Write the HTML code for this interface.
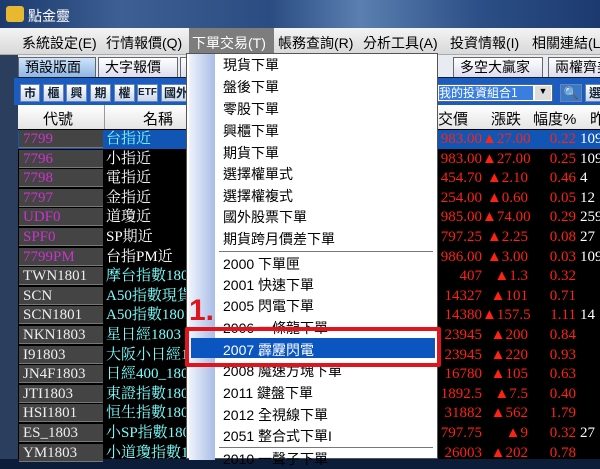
<!DOCTYPE html>
<html><head><meta charset="utf-8"><style>
*{margin:0;padding:0;box-sizing:border-box}
body{width:600px;height:459px;overflow:hidden;position:relative;background:#0c1d3a;font-family:"Liberation Serif","Noto Serif CJK SC","Noto Sans CJK TC",serif}
.a{position:absolute;white-space:nowrap}
.title{left:0;top:0;width:600px;height:28px;background:linear-gradient(90deg,#1c3a6e,#3d5f93 20%,#2a4c82 45%,#5a7fb0 60%,#2b4f86 80%,#1c3a70)}
.menubar{left:0;top:28px;width:600px;height:27px;background:linear-gradient(#f4f4f4,#d8d8d8);border-bottom:1px solid #aaa;font:14px "Liberation Sans","Noto Sans CJK TC",sans-serif;color:#000}
.menubar span{position:absolute;top:5px}
.tabs{left:18px;top:55px;width:582px;height:22px;background:#e8ecf2}
.tab{position:absolute;top:2px;height:20px;border:1px solid #666;border-bottom:none;background:linear-gradient(#fff,#dde);font:14px "Liberation Sans","Noto Sans CJK TC",sans-serif;padding:0 6px;line-height:19px}
.tool{left:14px;top:78px;width:586px;height:27px;background:#1a5cbf}
.btn{position:absolute;top:6px;height:18px;background:linear-gradient(#fff,#c9d6ea);border:1px solid #6a85b0;font:bold 12px "Liberation Sans","Noto Sans CJK TC",sans-serif;color:#123;text-align:center;line-height:16px}
.hdr{left:18px;top:105px;width:582px;height:24px;background:linear-gradient(#fff,#e4e4e4);font:15px "Liberation Sans","Noto Sans CJK TC",sans-serif}
.hdr span{position:absolute;top:3px}
.row{position:absolute;left:18px;width:582px;height:19.6px;font-size:15px;line-height:19px}
.c{position:absolute;left:1px;width:84px;height:18px;background:#444;color:#eee;padding-left:4px;border-bottom:1px solid #777}
.n{position:absolute;left:87px;width:120px;color:#7ff;padding-left:1px}
.r{position:absolute;color:#f21;text-align:right}
.menu{left:186px;top:53px;width:252px;height:406px;background:#fff;border:1px solid #555;font:14px "Liberation Sans","Noto Sans CJK TC",sans-serif;color:#000}
.strip{position:absolute;left:2px;top:0;width:26px;height:406px;background:linear-gradient(90deg,#eef2fb,#a9bde6)}
.mi{position:absolute;left:36px}
.sep{position:absolute;left:32px;width:214px;height:1px;background:#777}
</style></head><body>
<div class="a title"></div>
<div class="a" style="left:6px;top:6px;width:18px;height:16px;background:#e8b830;border-radius:3px"></div>
<div class="a" style="left:28px;top:6px;font:14px 'Noto Sans CJK TC',sans-serif;color:#fff">點金靈</div>
<div class="a" style="left:0;top:28px;width:18px;height:431px;background:#2c3e5e"></div>
<div class="a menubar">
<span style="left:22px">系統設定(E)</span><span style="left:106px">行情報價(Q)</span>
<span style="left:189px;top:0;height:27px;width:85px;background:#7d7d7d;color:#fff;padding:5px 0 0 3px">下單交易(T)</span>
<span style="left:278px">帳務查詢(R)</span><span style="left:363px">分析工具(A)</span><span style="left:450px">投資情報(I)</span><span style="left:532px">相關連結(L)</span>
</div>
<div class="a tabs">
<div class="tab" style="left:0;width:78px;background:linear-gradient(#cfe4fb,#8fb6e4)">預設版面</div>
<div class="tab" style="left:80px;width:80px">大字報價</div>
<div class="tab" style="left:162px;width:60px">選</div>
<div class="tab" style="left:435px;width:90px">多空大贏家</div>
<div class="tab" style="left:530px;width:70px">兩權齊美</div>
</div>
<div class="a tool">
<div class="btn" style="left:6px;width:20px">市</div><div class="btn" style="left:29px;width:21px">櫃</div><div class="btn" style="left:52px;width:21px">興</div><div class="btn" style="left:76px;width:21px">期</div><div class="btn" style="left:100px;width:21px">權</div><div class="btn" style="left:123px;width:21px;font-size:10px">ETF</div><div class="btn" style="left:147px;width:30px">國外</div>
<div class="a" style="left:423px;top:6px;width:116px;height:18px;background:#fff;border:1px solid #567"><div style="position:absolute;left:1px;top:1px;width:94px;height:14px;background:#3a7fe0;color:#fff;font:12px 'Noto Sans CJK TC',sans-serif;line-height:14px">我的投資組合1</div><div style="position:absolute;right:1px;top:1px;width:16px;height:14px;background:#ddd;font-size:9px;text-align:center">▼</div></div>
<div class="btn" style="left:546px;width:22px;background:#3a78c8;color:#fff">🔍</div>
<div class="btn" style="left:571px;width:20px">選</div>
</div>
<div class="a hdr">
<span style="left:25px">代號</span><span style="left:125px">名稱</span><span style="left:405px">成交價</span><span style="left:473px">漲跌</span><span style="left:515px">幅度%</span><span style="left:572px">昨</span>
<div style="position:absolute;left:86px;top:0;width:1px;height:24px;background:#999"></div>
</div>
<div class="a" style="left:18px;top:129px;width:582px;height:330px;background:#000"></div>
<div id="rows"></div>
<div class="a" style="left:18px;top:130px;width:582px;height:19px;background:#1156b4"></div>
<div class="a row" style="top:130px"><div class="c" style="color:#c3c">7799</div><div class="n">台指近</div><div class="r" style="left:400px;width:64px">983.00</div><div class="r" style="left:464px;width:46px">▲27.00</div><div class="r" style="left:510px;width:48px">0.22</div><div class="r" style="left:562px;color:#fff;text-align:left">109</div></div>
<div class="a row" style="top:149.6px"><div class="c" style="color:#c3c">7796</div><div class="n" style="color:#fff">小指近</div><div class="r" style="left:400px;width:64px">983.00</div><div class="r" style="left:464px;width:46px">▲27.00</div><div class="r" style="left:510px;width:48px">0.25</div><div class="r" style="left:562px;color:#fff;text-align:left">109</div></div>
<div class="a row" style="top:169.2px"><div class="c" style="color:#c3c">7798</div><div class="n" style="color:#fff">電指近</div><div class="r" style="left:400px;width:64px">454.70</div><div class="r" style="left:464px;width:46px">▲2.10</div><div class="r" style="left:510px;width:48px">0.46</div><div class="r" style="left:562px;color:#fff;text-align:left">4</div></div>
<div class="a row" style="top:188.8px"><div class="c" style="color:#c3c">7797</div><div class="n" style="color:#fff">金指近</div><div class="r" style="left:400px;width:64px">254.00</div><div class="r" style="left:464px;width:46px">▲0.60</div><div class="r" style="left:510px;width:48px">0.05</div><div class="r" style="left:562px;color:#fff;text-align:left">12</div></div>
<div class="a row" style="top:208.4px"><div class="c" style="color:#c3c">UDF0</div><div class="n" style="color:#fff">道瓊近</div><div class="r" style="left:400px;width:64px">985.00</div><div class="r" style="left:464px;width:46px">▲74.00</div><div class="r" style="left:510px;width:48px">0.29</div><div class="r" style="left:562px;color:#fff;text-align:left">259</div></div>
<div class="a row" style="top:228px"><div class="c" style="color:#c3c">SPF0</div><div class="n" style="color:#fff">SP期近</div><div class="r" style="left:400px;width:64px">797.25</div><div class="r" style="left:464px;width:46px">▲2.25</div><div class="r" style="left:510px;width:48px">0.08</div><div class="r" style="left:562px;color:#fff;text-align:left">27</div></div>
<div class="a row" style="top:247.6px"><div class="c" style="color:#c3c">7799PM</div><div class="n" style="color:#fff">台指PM近</div><div class="r" style="left:400px;width:64px">986.00</div><div class="r" style="left:464px;width:46px">▲3.00</div><div class="r" style="left:510px;width:48px">0.03</div><div class="r" style="left:562px;color:#fff;text-align:left">109</div></div>
<div class="a row" style="top:267.2px"><div class="c">TWN1801</div><div class="n">摩台指數1801</div><div class="r" style="left:400px;width:64px">407</div><div class="r" style="left:464px;width:46px">▲1.3</div><div class="r" style="left:510px;width:48px">0.32</div></div>
<div class="a row" style="top:286.8px"><div class="c">SCN</div><div class="n">A50指數現貨</div><div class="r" style="left:400px;width:64px">14327</div><div class="r" style="left:464px;width:46px">▲101</div><div class="r" style="left:510px;width:48px">0.71</div></div>
<div class="a row" style="top:306.4px"><div class="c">SCN1801</div><div class="n">A50指數1801</div><div class="r" style="left:400px;width:64px">14380</div><div class="r" style="left:464px;width:46px">▲157.5</div><div class="r" style="left:510px;width:48px">1.11</div><div class="r" style="left:562px;color:#fff;text-align:left">14</div></div>
<div class="a row" style="top:326px"><div class="c">NKN1803</div><div class="n">星日經1803</div><div class="r" style="left:400px;width:64px">23945</div><div class="r" style="left:464px;width:46px">▲200</div><div class="r" style="left:510px;width:48px">0.84</div></div>
<div class="a row" style="top:345.6px"><div class="c">I91803</div><div class="n">大阪小日經1803</div><div class="r" style="left:400px;width:64px">23945</div><div class="r" style="left:464px;width:46px">▲220</div><div class="r" style="left:510px;width:48px">0.93</div></div>
<div class="a row" style="top:365.2px"><div class="c">JN4F1803</div><div class="n">日經400_1803</div><div class="r" style="left:400px;width:64px">16780</div><div class="r" style="left:464px;width:46px">▲105</div><div class="r" style="left:510px;width:48px">0.63</div></div>
<div class="a row" style="top:384.8px"><div class="c">JTI1803</div><div class="n">東證指數1803</div><div class="r" style="left:400px;width:64px">1892.5</div><div class="r" style="left:464px;width:46px">▲7.5</div><div class="r" style="left:510px;width:48px">0.40</div></div>
<div class="a row" style="top:404.4px"><div class="c">HSI1801</div><div class="n">恒生指數1801</div><div class="r" style="left:400px;width:64px">31882</div><div class="r" style="left:464px;width:46px">▲562</div><div class="r" style="left:510px;width:48px">1.79</div></div>
<div class="a row" style="top:424px"><div class="c">ES_1803</div><div class="n">小SP指數1803</div><div class="r" style="left:400px;width:64px">797.75</div><div class="r" style="left:464px;width:46px">▲9</div><div class="r" style="left:510px;width:48px">0.32</div><div class="r" style="left:562px;color:#fff;text-align:left">27</div></div>
<div class="a row" style="top:443.6px"><div class="c">YM1803</div><div class="n">小道瓊指數1803</div><div class="r" style="left:400px;width:64px">26003</div><div class="r" style="left:464px;width:46px">▲202</div><div class="r" style="left:510px;width:48px">0.78</div></div>

<div class="a menu">
<div class="strip"></div>
<div class="mi" style="top:1px">現貨下單</div>
<div class="mi" style="top:23px">盤後下單</div>
<div class="mi" style="top:45px">零股下單</div>
<div class="mi" style="top:67px">興櫃下單</div>
<div class="mi" style="top:89px">期貨下單</div>
<div class="mi" style="top:110px">選擇權單式</div>
<div class="mi" style="top:132px">選擇權複式</div>
<div class="mi" style="top:153px">國外股票下單</div>
<div class="mi" style="top:175px">期貨跨月價差下單</div>
<div class="sep" style="top:197px"></div>
<div class="mi" style="top:200px">2000 下單匣</div>
<div class="mi" style="top:221px">2001 快速下單</div>
<div class="mi" style="top:242px">2005 閃電下單</div>
<div class="mi" style="top:264px">2006 一條龍下單</div>
<div style="position:absolute;left:4px;top:284px;width:244px;height:20px;background:#0a55c0"></div>
<div class="mi" style="top:286px;color:#fff">2007 霹靂閃電</div>
<div class="mi" style="top:307px">2008 魔速方塊下單</div>
<div class="mi" style="top:329px">2011 鍵盤下單</div>
<div class="mi" style="top:351px">2012 全視線下單</div>
<div class="mi" style="top:372px">2051 整合式下單I</div>
<div class="sep" style="top:393px"></div>
<div class="mi" style="top:395px">2010 一聲子下單</div>
</div>
<div class="a" style="left:185px;top:327px;width:256px;height:40px;border:4px solid #e0141c;border-radius:2px"></div>
<div class="a" style="left:189px;top:294px;font:bold 30px 'Liberation Sans',sans-serif;color:#e0141c;line-height:34px">1.</div>
</body></html>
